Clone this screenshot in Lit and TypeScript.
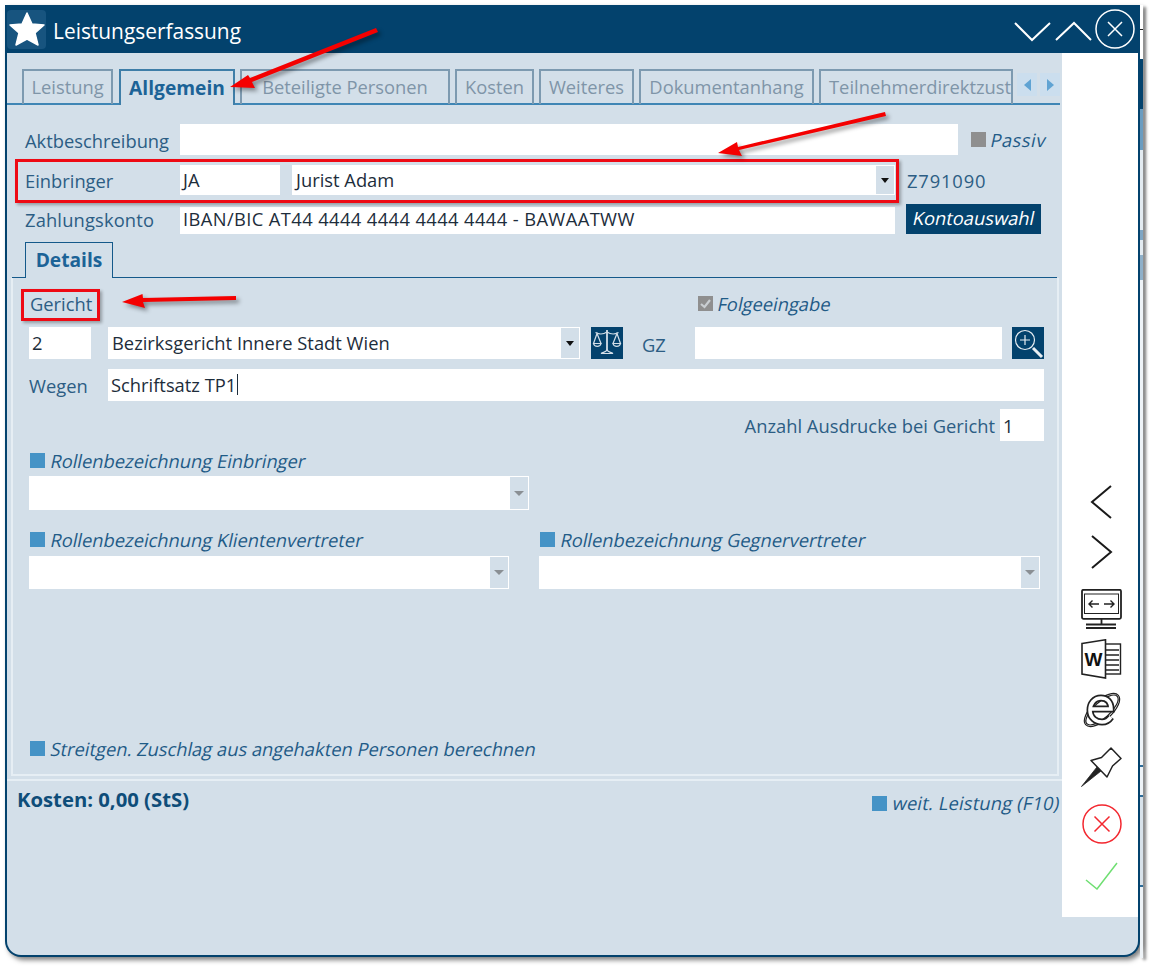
import { LitElement, html, css } from "lit";
import { customElement } from "lit/decorators.js";

const tabs = [
  { label: "Leistung", width: 91 },
  { label: "Allgemein", width: 116, on: true },
  { label: "Beteiligte Personen", width: 210 },
  { label: "Kosten", width: 79 },
  { label: "Weiteres", width: 95 },
  { label: "Dokumentanhang", width: 175 },
  { label: "Teilnehmerdirektzust", width: 194, cut: true },
];

@customElement("app-root")
export class AppRoot extends LitElement {
  static styles = css`
    :host { display: block; position: relative; width: 1152px; height: 968px; background: #fff; overflow: hidden;
      font-family: "Open Sans", "Noto Sans", sans-serif; font-size: 18.33px; color: #2c5d84; }
    * { box-sizing: border-box; }
    .win { margin: 5px 0 0 5px; width: 1135px; height: 952px; background: #d3dfe9; border: 2px solid #03426d; border-top: 0;
      border-radius: 0 0 16px 16px; box-shadow: 3px 3px 5px rgba(0,0,0,.5); display: flex; flex-direction: column; }
    .peek { position: absolute; left: 1140px; top: 5px; width: 3px; height: 953px; box-shadow: 3px 2px 3px rgba(0,0,0,.45);
      background: linear-gradient(#fff 0 24px, #222 24px 25px, #fff 25px 54px, #03426d 54px 104px, #6a9cc0 104px 145px, #e3ebf1 145px 225px, #7fa6c4 225px 235px, #e3ebf1 235px 250px, #8fb0c9 250px 275px, #eef3f7 275px 760px, #2d6c99 760px 762px, #eef3f7 762px 790px, #2d6c99 790px 792px, #d8e2ea 792px 880px, #2d6c99 880px 882px, #eef3f7 882px); }
    .title { flex: none; height: 48px; margin: 0 -2px; background: #03426d; display: flex; align-items: center; color: #fff; }
    .star { width: 39px; height: 39px; margin-left: 2px; background: #17547f; border-radius: 4px; display: block; flex: none; }
    .title h1 { margin: 3px 0 0 7px; font-size: 20.9px; font-weight: 400; flex: 1; }
    .winbtn { display: block; margin-right: 5px; flex: none; }
    .body { flex: 1; display: flex; min-height: 0; }
    .main { width: 1055px; display: flex; flex-direction: column; }
    .side { width: 76px; height: 864px; background: #fff; padding: 432px 0 0 16px; display: flex; flex-direction: column; align-items: flex-start; }
    .side svg { display: block; flex: none; }
    .m10 { margin-top: 10px; } .m16 { margin-top: 16px; } .m17 { margin-top: 17px; } .m18 { margin-top: 18px; } .m20 { margin-top: 20px; }

    .tabs { margin-top: 16px; height: 36px; padding-left: 15px; border-bottom: 2px solid #3f86b5; display: flex; gap: 5px; flex: none; width: 1053px; }
    .tab { height: 35px; border: 2px solid #7d9ab0; border-bottom: 0; color: #7f95a8; line-height: 32px; white-space: nowrap; text-align: center; flex: none; }
    .tab.on { height: 36px; margin-left: 1px; background: #d3dfe9; border-color: #3f7ea8; color: #1c6397; font-weight: 700; font-size: 19.2px; padding-top: 1px; }
    .tab.cut { text-align: left; padding-left: 8px; }
    .arrow { width: 20px; height: 23px; margin-top: 4px; background: #cbdeee; display: flex; align-items: center; justify-content: center; flex: none; }
    .tab + .arrow { margin-left: -1px; }
    .arrow + .arrow { margin-left: -2px; }
    .arrow i { width: 0; height: 0; border: 6px solid transparent; border-left: 0; border-right: 7px solid #5fa3d3; }
    .arrow.r i { border-right: 0; border-left: 7px solid #5fa3d3; }

    .row { display: flex; align-items: center; flex: none; }
    .lbl { flex: none; white-space: nowrap; padding-top: 1px; }
    .r1 .lbl { padding-top: 2px; }
    .input { flex: none; background: #fff; color: #1d2d3b; height: 100%; padding: 0 3px 2px; display: flex; align-items: center; white-space: nowrap; }
    .select { flex: none; background: #fff; color: #1d2d3b; height: 100%; padding: 0 0 0 4px; display: flex; align-items: center; white-space: nowrap; border: 1px solid #fff; border-left: 0; }
    .select span { padding-bottom: 2px; }
    .ddbtn { flex: none; width: 18px; height: 100%; margin-left: auto; background: #d3dfe9; display: flex; align-items: center; justify-content: center; }
    .ddbtn i { width: 0; height: 0; border: 4.5px solid transparent; border-bottom: 0; border-top: 5px solid #111; }
    .ddbtn.dis i { border-top-color: #8a8f94; border-left-width: 5px; border-right-width: 5px; }
    .r1 { margin: 19px 0 0 18px; height: 31px; }
    .r2 { margin: 10px 0 0 18px; height: 30px; }
    .r3 { margin: 9px 0 0 18px; height: 30px; }
    .w155 { width: 155px; }
    .r3 .input { height: 27px; margin-top: 3px; padding-bottom: 4px; letter-spacing: .39px; }
    .r3 .lbl { letter-spacing: .15px; }
    .wide { letter-spacing: .85px; }
    .chk { flex: none; width: 15px; height: 15px; background: #4593c6; display: block; }
    .chk.grey { background: #8f8f8f; }
    .it { display: inline-block; transform: skewX(-12deg); color: #1f5b87; white-space: nowrap; }
    .passiv { letter-spacing: .5px; margin-left: 5px; }
    .btn { flex: none; background: #03426d; color: #fff; display: flex; align-items: center; justify-content: center; }
    .btn span { display: inline-block; transform: skewX(-12deg); padding-bottom: 3px; }
    .konto { width: 135px; height: 30px; margin-left: 11px; }

    .dtabs { margin: 8px 0 0 5px; width: 1045px; height: 36px; padding-left: 13px; border-bottom: 1.5px solid #14598a; flex: none; display: flex; }
    .dtab { width: 88px; height: 36px; background: #d3dfe9; border: 1.5px solid #14598a; border-bottom: 0; color: #1c6397; font-weight: 700; font-size: 19.2px; text-align: center; line-height: 33px; }
    .panel { margin-left: 4px; width: 1048px; height: 498px; border: 2px solid #e6eef4; border-top: 0; padding: 0 0 0 16px; flex: none; display: flex; flex-direction: column; }
    .p1 { margin-top: 10px; height: 30px; padding-left: 1px; }
    .p1 .it { margin-left: 5px; }
    .p2 { margin-top: 9px; height: 32px; }
    .p3 { margin-top: 10px; height: 32px; }
    .p4 { margin-top: 8px; height: 32px; justify-content: flex-end; width: 1015px; }
    .p4 .input { padding-bottom: 0; }
    .gz { padding-top: 3px; margin-left: 19px; width: 53px; }
    .sq { width: 32px; height: 32px; display: block; flex: none; }
    .label-rol { margin-top: 12px; height: 15px; padding-left: 1px; }
    .label-rol .it, .streit .it { margin-left: 6px; }
    .s1 { margin-top: 8px; height: 34px; }
    .s2 { margin-top: 9px; height: 33px; }
    .rl2 { margin-top: 22px; height: 15px; padding-left: 1px; }
    .col { width: 510px; display: flex; align-items: center; }
    .col .it { margin-left: 6px; }
    .streit { margin-top: 152px; height: 15px; padding-left: 1px; }
    .sep { margin: 3px 0 0 0; height: 2px; background: #e6eef4; width: 1055px; flex: none; }
    .foot { margin-top: 6px; display: flex; align-items: flex-start; justify-content: space-between; width: 1053px; }
    .cost { margin-left: 10px; font-weight: 700; color: #0e4d79; font-size: 20.3px; line-height: 24px; }
    .more { display: flex; align-items: center; height: 28px; margin-top: 2px; }
    .more .it { margin-left: 6px; letter-spacing: .17px; padding-bottom: 1px; }
    .caret { display: inline-block; width: 1px; height: 21px; background: #1d2d3b; margin-left: 1px; }

    .anno { position: absolute; left: 0; top: 0; width: 1152px; height: 968px; pointer-events: none; }
    .anno polygon { fill: #f40000; }
    .anno g { filter: drop-shadow(3px 3px 2px rgba(0,0,0,.4)); }
    .box { position: absolute; border: 3px solid #ee0a14; box-shadow: 2px 2px 3px rgba(0,0,0,.3); pointer-events: none; }
    .b1 { left: 15px; top: 159px; width: 884px; height: 44px; }
    .b2 { left: 21px; top: 289px; width: 79px; height: 32px; }
  `;

  private cap(cls = "") { return html`<div class="ddbtn ${cls}"><i></i></div>`; }

  render() {
    return html`
      <div class="peek"></div>
      <div class="win">
        <div class="title">
          <svg class="star" viewBox="0 0 39 39"><polygon fill="#fff" stroke="#fff" stroke-width="1.5" stroke-linejoin="round" points="20,3 25,14 37,15 28,23 31,35 20,29 9,35 12,23 3,15 15,14"/></svg>
          <h1>Leistungserfassung</h1>
          <svg class="winbtn" width="122" height="40" viewBox="0 0 122 40" fill="none" stroke="#fff">
            <polyline stroke-width="2" points="2,14 19,31 37,14"/>
            <polyline stroke-width="2" points="43,31 61,14 78,31"/>
            <circle cx="102" cy="20" r="19" stroke-width="1.5"/>
            <path stroke-width="1.5" d="M95 13 L109 27 M109 13 L95 27"/>
          </svg>
        </div>
        <div class="body">
          <div class="main">
            <div class="tabs">
              ${tabs.map((t) => html`<div class="tab ${t.on ? "on" : ""} ${t.cut ? "cut" : ""}" style="width:${t.width}px">${t.label}</div>`)}
              <div class="arrow"><i></i></div>
              <div class="arrow r"><i></i></div>
            </div>
            <div class="row r1">
              <span class="lbl w155">Aktbeschreibung</span>
              <div class="input" style="width:778px"></div>
              <span class="chk grey" style="margin-left:13px"></span>
              <span class="it passiv">Passiv</span>
            </div>
            <div class="row r2">
              <span class="lbl w155">Einbringer</span>
              <div class="input" style="width:100px">JA</div>
              <div class="select" style="width:603px;margin-left:12px"><span>Jurist Adam</span>${this.cap()}</div>
              <span class="lbl wide" style="margin-left:12px">Z791090</span>
            </div>
            <div class="row r3">
              <span class="lbl w155">Zahlungskonto</span>
              <div class="input" style="width:715px">IBAN/BIC AT44 4444 4444 4444 4444 - BAWAATWW</div>
              <div class="btn konto"><span>Kontoauswahl</span></div>
            </div>
            <div class="dtabs"><div class="dtab">Details</div></div>
            <div class="panel">
              <div class="row p1">
                <span class="lbl" style="width:668px">Gericht</span>
                <svg class="chk grey" viewBox="0 0 15 15"><polyline points="3,8 6.5,11 12,4" fill="none" stroke="#c9ced2" stroke-width="2.2"/></svg>
                <span class="it">Folgeeingabe</span>
              </div>
              <div class="row p2">
                <div class="input" style="width:62px">2</div>
                <div class="select" style="width:472px;margin-left:17px"><span>Bezirksgericht Innere Stadt Wien</span>${this.cap()}</div>
                <svg class="sq" style="margin-left:11px" viewBox="0 0 32 32">
                  <rect width="32" height="32" fill="#03426d"/>
                  <g fill="none" stroke="#d3dfe9" stroke-width="1.2">
                    <path stroke-width="1.8" d="M16 3 V24"/>
                    <path d="M10 26.5 C13 25 15 25 16 23 C17 25 19 25 22 26.5 Z M4.5 5.5 C9 8 13 7 16 5 C19 7 23 8 27.5 5.5"/>
                    <path d="M6 6.5 L2.5 16.5 H10 Z M26 6.5 L22 16.5 H29.5 Z"/>
                    <path d="M2.5 16.5 a3.8 3.5 0 0 0 7.5 0 M22 16.5 a3.8 3.5 0 0 0 7.5 0"/>
                  </g>
                </svg>
                <span class="lbl gz">GZ</span>
                <div class="input" style="width:307px"></div>
                <svg class="sq" style="margin-left:10px" viewBox="0 0 32 32">
                  <rect width="32" height="32" fill="#03426d"/>
                  <g fill="none" stroke="#e8eef3">
                    <circle cx="13" cy="13" r="9.5" stroke-width="1.2"/>
                    <path stroke-width="1.2" d="M13 8 V18 M8 13 H18"/>
                    <path stroke-width="3" d="M21 21 L30 30"/>
                  </g>
                </svg>
              </div>
              <div class="row p3">
                <span class="lbl" style="width:79px">Wegen</span>
                <div class="input" style="width:936px">Schriftsatz TP1<span class="caret"></span></div>
              </div>
              <div class="row p4">
                <span class="lbl" style="margin-right:5px">Anzahl Ausdrucke bei Gericht</span>
                <div class="input" style="width:44px">1</div>
              </div>
              <div class="row label-rol"><span class="chk"></span><span class="it">Rollenbezeichnung Einbringer</span></div>
              <div class="row s1"><div class="select" style="width:500px">${this.cap("dis")}</div></div>
              <div class="row rl2">
                <div class="col"><span class="chk"></span><span class="it">Rollenbezeichnung Klientenvertreter</span></div>
                <div class="col"><span class="chk"></span><span class="it">Rollenbezeichnung Gegnervertreter</span></div>
              </div>
              <div class="row s2">
                <div class="select" style="width:480px">${this.cap("dis")}</div>
                <div class="select" style="width:501px;margin-left:30px">${this.cap("dis")}</div>
              </div>
              <div class="row streit"><span class="chk"></span><span class="it">Streitgen. Zuschlag aus angehakten Personen berechnen</span></div>
            </div>
            <div class="sep"></div>
            <div class="foot">
              <div class="cost">Kosten: 0,00 (StS)</div>
              <div class="more"><span class="chk"></span><span class="it">weit. Leistung (F10)</span></div>
            </div>
          </div>
          <div class="side">
            <svg width="44" height="34" viewBox="0 0 44 34" fill="none" stroke="#1a1a1a" stroke-width="2"><polyline points="33,1 14,17 33,33"/></svg>
            <svg class="m16" width="44" height="34" viewBox="0 0 44 34" fill="none" stroke="#1a1a1a" stroke-width="2"><polyline points="14,1 33,17 14,33"/></svg>
            <svg class="m20" width="44" height="40" viewBox="0 0 44 40" fill="none" stroke="#222">
              <rect x="4" y="0.8" width="39" height="29" rx="1.5" stroke-width="1.8"/>
              <rect x="6.5" y="5" width="34" height="19.5" stroke-width="1"/>
              <path stroke-width="1.4" d="M11 15 H21 M14.5 11.5 L11 15 L14.5 18.5 M26 15 H36 M32.5 11.5 L36 15 L32.5 18.5"/>
              <path stroke-width="1.8" d="M23.5 30 V35 M8 35.5 H38 M8 39 H38"/>
            </svg>
            <svg class="m10" width="44" height="40" viewBox="0 0 44 40" fill="none" stroke="#222">
              <rect x="27" y="5" width="15.5" height="30" stroke-width="1.4"/>
              <path stroke-width="1.4" d="M27 11 H41 M27 16 H41 M27 21 H41 M27 26 H41 M27 31 H41"/>
              <polygon fill="#fff" stroke-width="1.6" points="4,4.5 27.5,0.8 27.5,39 4,35"/>
              <text x="15.5" y="26.5" text-anchor="middle" fill="#111" stroke="none" font-family="Liberation Sans" font-weight="700" font-size="19">W</text>
            </svg>
            <svg class="m10" width="44" height="42" viewBox="0 0 44 42" fill="none" stroke="#222">
              <ellipse cx="24" cy="21" rx="22" ry="10" transform="rotate(-42 24 21)" stroke-width="1.2"/>
              <ellipse cx="24" cy="21" rx="20.5" ry="8" transform="rotate(-42 24 21)" stroke-width="1.2"/>
              <path stroke-width="7" d="M13 20 H33 C33 12 28 9 23 9 C16 9 12 15 12 21 C12 29 18 33 24 33 C28 33 31 31 33 28"/>
              <path stroke="#fff" stroke-width="3.6" d="M13 20 H33 C33 12 28 9 23 9 C16 9 12 15 12 21 C12 29 18 33 24 33 C28 33 31 31 33 28"/>
            </svg>
            <svg class="m16" width="44" height="40" viewBox="0 0 44 40" fill="none" stroke="#222" stroke-width="1.5" stroke-linejoin="round">
              <path d="M33 1 L23.5 10.5 L13 13.5 L29 30 L34.5 19 L43 11.5 Z"/>
              <path fill="#222" stroke-width="0.8" d="M19 20 L3.5 39.5 L23 24 Z"/>
            </svg>
            <svg class="m17" width="44" height="40" viewBox="0 0 44 40" fill="none" stroke="#f3272f" stroke-width="1.5">
              <circle cx="24" cy="20" r="19"/>
              <path d="M16.5 12.5 L31.5 27.5 M31.5 12.5 L16.5 27.5"/>
            </svg>
            <svg class="m18" width="44" height="28" viewBox="0 0 44 28" fill="none" stroke="#6fdf72" stroke-width="1.5"><polyline points="8,18 19,27 39,1"/></svg>
          </div>
        </div>
      </div>
      <div class="box b1"></div>
      <div class="box b2"></div>
      <svg class="anno" viewBox="0 0 1152 968">
        <g><polygon points="376,28 378,32 252,82 255,88 230,87 248,75 250,78"/></g>
        <g><polygon points="885,112 886,116 739,150 742,156 718,153 737,142 738,147"/></g>
        <g><polygon points="236,296 236,300 143,302 145,308 122,302 142.5,294 143,298"/></g>
      </svg>
    `;
  }
}
